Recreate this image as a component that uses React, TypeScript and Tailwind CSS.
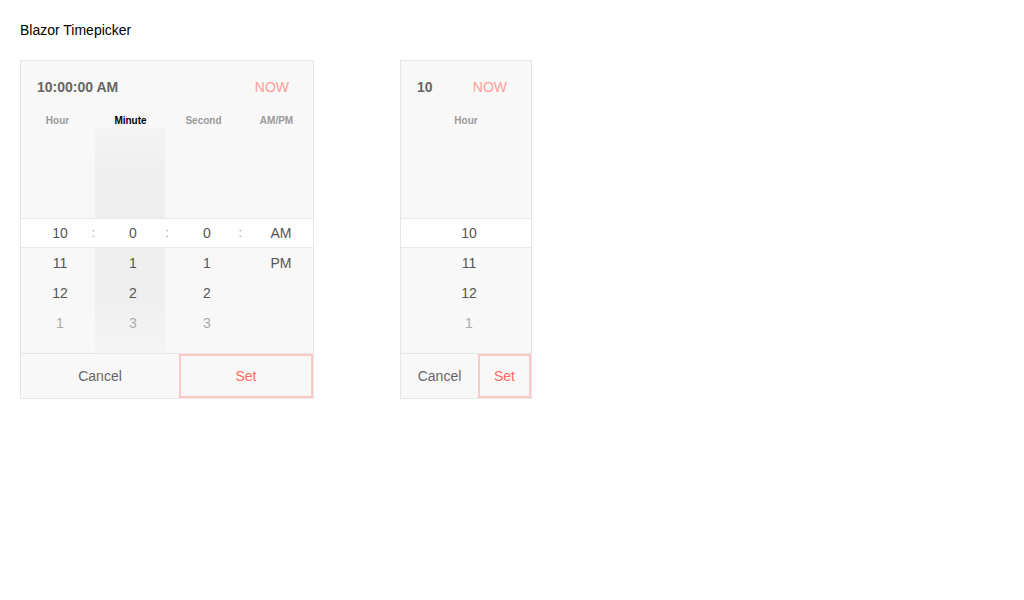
const font = { fontFamily: '"Liberation Sans", Arial, sans-serif' };

type Col = { label: string; width: string; pad: string; colon: string; selected?: boolean };

const fullCols: Col[] = [
  { label: "Hour", width: "w-[74px]", pad: "pl-[4px]", colon: "right-0" },
  { label: "Minute", width: "w-[70px]", pad: "pl-[6px]", colon: "right-[-4px]", selected: true },
  { label: "Second", width: "w-[74px]", pad: "pl-[10px]", colon: "right-[-3px]" },
  { label: "AM/PM", width: "w-[74px]", pad: "pl-[10px]", colon: "" },
];

function ValueCell({ children, faded }: { children?: React.ReactNode; faded?: boolean }) {
  return (
    <div className={`h-[30px] flex items-center justify-center ${faded ? "text-[#ababab]" : "text-[#555555]"}`}>
      {children}
    </div>
  );
}

function FullPicker() {
  const selectedRow = ["10", "0", "0", "AM"];
  const below = [
    ["11", "1", "1", "PM"],
    ["12", "2", "2", ""],
    ["1", "3", "3", ""],
  ];
  return (
    <div className="w-[294px] border border-[#e6e6e6] bg-[#f8f8f8] text-sm">
      <div className="h-[51px] flex items-center justify-between pl-4 pr-6">
        <span className="font-bold text-[#666666]">10:00:00 AM</span>
        <span className="text-[#ff9d96]">NOW</span>
      </div>
      <div className="h-4 flex items-center pt-[2px]">
        {fullCols.map((c) => (
          <div
            key={c.label}
            className={`flex-1 text-center text-[10px] font-bold ${c.selected ? "text-black" : "text-[#9a9a9a]"}`}
          >
            {c.label}
          </div>
        ))}
      </div>
      {/* above the selection */}
      <div className="h-[90px] flex">
        {fullCols.map((c) => (
          <div
            key={c.label}
            className={`${c.width} ${c.selected ? "bg-linear-to-b from-[#f4f4f4] via-[#efefef] to-[#eeeeee]" : ""}`}
          />
        ))}
      </div>
      {/* selected row */}
      <div className="h-[30px] flex bg-white border-y border-[#e8e8e8]">
        {fullCols.map((c, i) => (
          <div key={c.label} className={`${c.width} relative flex items-center justify-center ${c.pad} text-[#555555]`}>
            {selectedRow[i]}
            {c.colon && (
              <span className={`absolute ${c.colon} top-0 h-full flex items-center text-[#9a9a9a] text-[13px]`}>:</span>
            )}
          </div>
        ))}
      </div>
      {/* below the selection */}
      <div className="h-[105px] flex">
        {fullCols.map((c, ci) => (
          <div
            key={c.label}
            className={`${c.width} ${c.pad} ${c.selected ? "bg-linear-to-b from-[#eeeeee] via-[#efefef] to-[#f5f5f5]" : ""}`}
          >
            {below.map((row, ri) => (
              <ValueCell key={ri} faded={ri === 2}>
                {row[ci]}
              </ValueCell>
            ))}
          </div>
        ))}
      </div>
      <div className="h-[45px] flex border-t border-[#e6e6e6]">
        <button className="w-[158px] flex items-center justify-center text-[#666666]">Cancel</button>
        <button className="flex-1 flex items-center justify-center text-[#ff6a5f] border-2 border-[#fccac6]">Set</button>
      </div>
    </div>
  );
}

function HourPicker() {
  return (
    <div className="w-[132px] border border-[#e6e6e6] bg-[#f8f8f8] text-sm">
      <div className="h-[51px] flex items-center justify-between pl-4 pr-6">
        <span className="font-bold text-[#666666]">10</span>
        <span className="text-[#ff9d96]">NOW</span>
      </div>
      <div className="h-4 flex items-center justify-center pt-[2px] text-[10px] font-bold text-[#9a9a9a]">Hour</div>
      <div className="h-[90px]" />
      <div className="h-[30px] flex items-center justify-center pl-[6px] bg-white border-y border-[#e8e8e8] text-[#555555]">
        10
      </div>
      <div className="h-[105px] pl-[6px]">
        <ValueCell>11</ValueCell>
        <ValueCell>12</ValueCell>
        <ValueCell faded>1</ValueCell>
      </div>
      <div className="h-[45px] flex border-t border-[#e6e6e6]">
        <button className="w-[77px] flex items-center justify-center text-[#666666]">Cancel</button>
        <button className="flex-1 flex items-center justify-center text-[#ff6a5f] border-2 border-[#fccac6]">Set</button>
      </div>
    </div>
  );
}

export default function App() {
  return (
    <div className="min-h-[600px] bg-white p-5" style={font}>
      <h1 className="text-sm text-black leading-5">Blazor Timepicker</h1>
      <div className="mt-5 flex items-start gap-[86px]">
        <FullPicker />
        <HourPicker />
      </div>
    </div>
  );
}
